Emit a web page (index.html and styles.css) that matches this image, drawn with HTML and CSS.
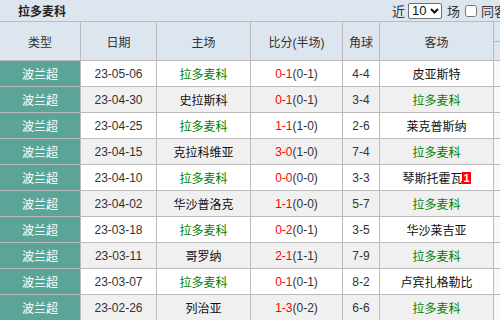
FILE: index.html
```html
<!DOCTYPE html>
<html lang="zh">
<head>
<meta charset="utf-8">
<link rel="stylesheet" href="styles.css">
</head>
<body>
<div class="panel">
  <div class="titlebar">
    <span class="title">拉多麦科</span>
    <div class="controls">
      <span>近</span>
      <span class="selwrap">
        <select class="count"><option>10</option><option>20</option></select>
        <svg class="chev" width="9" height="6" viewBox="0 0 9 6"><path d="M1 1 L4.5 4.5 L8 1" fill="none" stroke="#111" stroke-width="2"/></svg>
      </span>
      <span>场</span>
      <input type="checkbox" class="chk">
      <span>同客</span>
    </div>
  </div>
  <div class="table">
    <div class="row head">
      <div class="cell">类型</div>
      <div class="cell">日期</div>
      <div class="cell">主场</div>
      <div class="cell">比分(半场)</div>
      <div class="cell">角球</div>
      <div class="cell">客场</div>
      <div class="cell split"><div class="sub"></div><div class="sub"></div></div>
    </div>
    <div class="row">
      <div class="cell type">波兰超</div><div class="cell">23-05-06</div><div class="cell team home">拉多麦科</div>
      <div class="cell"><span class="ft">0-1</span>(0-1)</div><div class="cell">4-4</div><div class="cell team">皮亚斯特</div><div class="cell extra"></div>
    </div>
    <div class="row alt">
      <div class="cell type">波兰超</div><div class="cell">23-04-30</div><div class="cell team">史拉斯科</div>
      <div class="cell"><span class="ft">0-1</span>(0-1)</div><div class="cell">3-4</div><div class="cell team home">拉多麦科</div><div class="cell extra"></div>
    </div>
    <div class="row">
      <div class="cell type">波兰超</div><div class="cell">23-04-25</div><div class="cell team home">拉多麦科</div>
      <div class="cell"><span class="ft">1-1</span>(1-0)</div><div class="cell">2-6</div><div class="cell team">莱克普斯纳</div><div class="cell extra"></div>
    </div>
    <div class="row alt">
      <div class="cell type">波兰超</div><div class="cell">23-04-15</div><div class="cell team">克拉科维亚</div>
      <div class="cell"><span class="ft">3-0</span>(1-0)</div><div class="cell">7-4</div><div class="cell team home">拉多麦科</div><div class="cell extra"></div>
    </div>
    <div class="row">
      <div class="cell type">波兰超</div><div class="cell">23-04-10</div><div class="cell team home">拉多麦科</div>
      <div class="cell"><span class="ft">0-0</span>(0-0)</div><div class="cell">3-3</div><div class="cell team">琴斯托霍瓦<span class="badge">1</span></div><div class="cell extra"></div>
    </div>
    <div class="row alt">
      <div class="cell type">波兰超</div><div class="cell">23-04-02</div><div class="cell team">华沙普洛克</div>
      <div class="cell"><span class="ft">1-1</span>(0-0)</div><div class="cell">5-7</div><div class="cell team home">拉多麦科</div><div class="cell extra"></div>
    </div>
    <div class="row">
      <div class="cell type">波兰超</div><div class="cell">23-03-18</div><div class="cell team home">拉多麦科</div>
      <div class="cell"><span class="ft">0-2</span>(0-1)</div><div class="cell">3-5</div><div class="cell team">华沙莱吉亚</div><div class="cell extra"></div>
    </div>
    <div class="row alt">
      <div class="cell type">波兰超</div><div class="cell">23-03-11</div><div class="cell team">哥罗纳</div>
      <div class="cell"><span class="ft">2-1</span>(1-1)</div><div class="cell">7-9</div><div class="cell team home">拉多麦科</div><div class="cell extra"></div>
    </div>
    <div class="row">
      <div class="cell type">波兰超</div><div class="cell">23-03-07</div><div class="cell team home">拉多麦科</div>
      <div class="cell"><span class="ft">0-1</span>(0-1)</div><div class="cell">8-2</div><div class="cell team">卢宾扎格勒比</div><div class="cell extra"></div>
    </div>
    <div class="row alt">
      <div class="cell type">波兰超</div><div class="cell">23-02-26</div><div class="cell team">列治亚</div>
      <div class="cell"><span class="ft">1-3</span>(0-2)</div><div class="cell">6-6</div><div class="cell team home">拉多麦科</div><div class="cell extra"></div>
    </div>
  </div>
</div>
</body>
</html>
```

FILE: styles.css
```css
html, body {
  margin: 0;
  padding: 0;
  overflow: hidden;
}
body {
  width: 500px;
  height: 320px;
  font-family: "Liberation Sans", "Noto Sans CJK SC", sans-serif;
  font-size: 12px;
  color: #333;
  background: #fff;
}
.panel {
  width: 560px;
}
.titlebar {
  height: 21px;
  background: #dde5ef;
  display: flex;
  align-items: center;
  padding-left: 18px;
  box-sizing: border-box;
}
.title {
  font-weight: bold;
  font-size: 12px;
  color: #222;
}
.controls {
  margin-left: auto;
  display: flex;
  align-items: center;
  width: 168px;
  font-size: 13px;
  color: #333;
}
.selwrap {
  position: relative;
  display: inline-block;
  width: 34px;
  height: 16px;
  margin: 0 5px 0 3px;
}
.count {
  appearance: none;
  -webkit-appearance: none;
  width: 34px;
  height: 16px;
  margin: 0;
  padding: 0 0 0 3px;
  border: 1px solid #6f6f6f;
  border-radius: 2px;
  background: #fff;
  color: #111;
  font-family: "Liberation Sans", sans-serif;
  font-size: 13px;
  line-height: 14px;
  box-sizing: border-box;
  display: block;
}
.chev {
  position: absolute;
  right: 3px;
  top: 5px;
  pointer-events: none;
}
.chk {
  width: 12px;
  height: 12px;
  margin: 0 4px 0 5px;
}
.table {
  display: flex;
  flex-direction: column;
  gap: 1px;
  padding-top: 1px;
  background: #bbb;
}
.row {
  display: grid;
  grid-template-columns: 80px 75px 93px 91px 36px 113px 60px;
  column-gap: 1px;
  height: 25px;
}
.row.head {
  height: 38px;
}
.cell {
  background: #fff;
  display: flex;
  align-items: center;
  justify-content: center;
  white-space: nowrap;
}
.row.alt .cell {
  background: #f0f0f0;
}
.head .cell {
  background: #dde5ef;
  color: #333;
}
.head .cell.split {
  flex-direction: column;
  align-items: stretch;
  background: #bbb;
  gap: 1px;
}
.split .sub {
  flex: 1;
  background: #dde5ef;
}
.row .cell.type {
  background: #5aa597;
  color: #fff;
}
.row .cell.extra {
  background: #fcf8f4;
}
.team {
  color: #111;
}
.team.home {
  color: #008000;
}
.ft {
  color: #f00;
}
.badge {
  background: #f00;
  color: #fff;
  font-weight: bold;
  font-size: 11px;
  line-height: 12px;
  padding: 0 1px;
}
```
